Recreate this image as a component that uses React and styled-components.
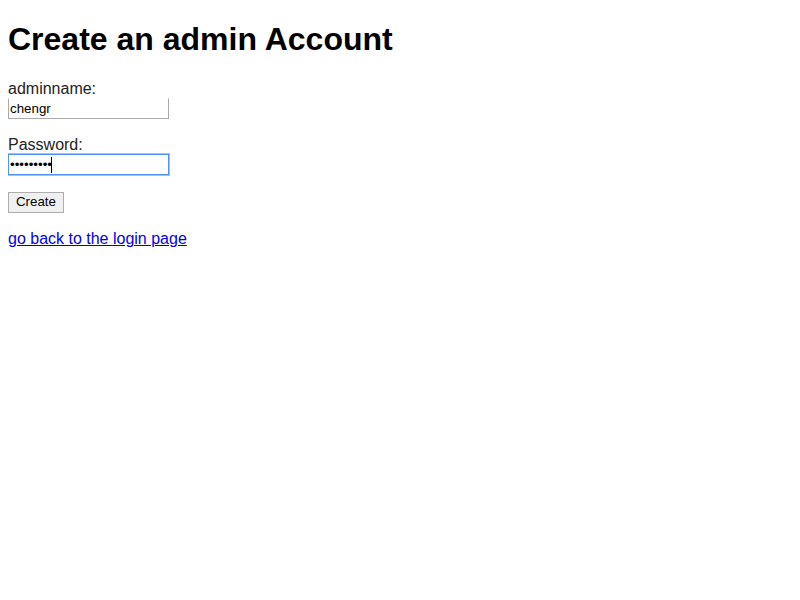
import React from "react";
import styled, { createGlobalStyle, css } from "styled-components";

const GlobalStyle = createGlobalStyle`
  body {
    margin: 8px;
    background: #ffffff;
    font-family: "Liberation Sans", Arial, sans-serif;
    color: #000000;
  }
`;

const Title = styled.h1`
  font-size: 32px;
  font-weight: bold;
  margin: 13.44px 0 21.44px;
  line-height: 36.8px;
`;

const Form = styled.form`
  display: flex;
  flex-direction: column;
  align-items: flex-start;
`;

const Label = styled.label`
  display: block;
  font-size: 16px;
  line-height: 18.4px;
  color: #222222;
  margin-top: ${(p) => p.$gap || 0}px;
`;

const FieldWrap = styled.div`
  position: relative;
`;

const Input = styled.input`
  box-sizing: border-box;
  display: block;
  width: 161px;
  height: 21px;
  margin: 0;
  padding: 0 2px 1px 1px;
  font-family: "Liberation Sans", Arial, sans-serif;
  font-size: 13.33px;
  color: #000000;
  background: #ffffff;
  border: 1px solid #a9a9a9;
  border-top-color: transparent;
  outline: none;
  ${(p) =>
    p.$focused &&
    css`
      border: 1px solid #4d90fe;
      box-shadow: 0 0 0 1px rgba(77, 144, 254, 0.55);
      caret-color: transparent;
    `}
`;

const Caret = styled.span`
  position: absolute;
  left: 43px;
  top: 3px;
  width: 1px;
  height: 16px;
  background: #000000;
`;

const Button = styled.button`
  box-sizing: border-box;
  margin-top: 17px;
  width: 56px;
  height: 21px;
  padding: 0 0 2px;
  font-family: "Liberation Sans", Arial, sans-serif;
  font-size: 13.33px;
  color: #000000;
  background: #f0f0f0;
  border: 1px solid #adadad;
  border-radius: 0;
`;

const BackLink = styled.a`
  display: block;
  margin-top: 17px;
  font-size: 16px;
  line-height: 18.4px;
  color: #0000ee;
  text-decoration: underline;
`;

export default function App() {
  return (
    <>
      <GlobalStyle />
      <Title>Create an admin Account</Title>
      <Form onSubmit={(e) => e.preventDefault()}>
        <Label>adminname:</Label>
        <FieldWrap>
          <Input type="text" defaultValue="chengr" />
        </FieldWrap>
        <Label $gap={17}>Password:</Label>
        <FieldWrap>
          <Input type="password" defaultValue="123456789" $focused />
          <Caret />
        </FieldWrap>
        <Button type="submit">Create</Button>
      </Form>
      <BackLink href="#">go back to the login page</BackLink>
    </>
  );
}
